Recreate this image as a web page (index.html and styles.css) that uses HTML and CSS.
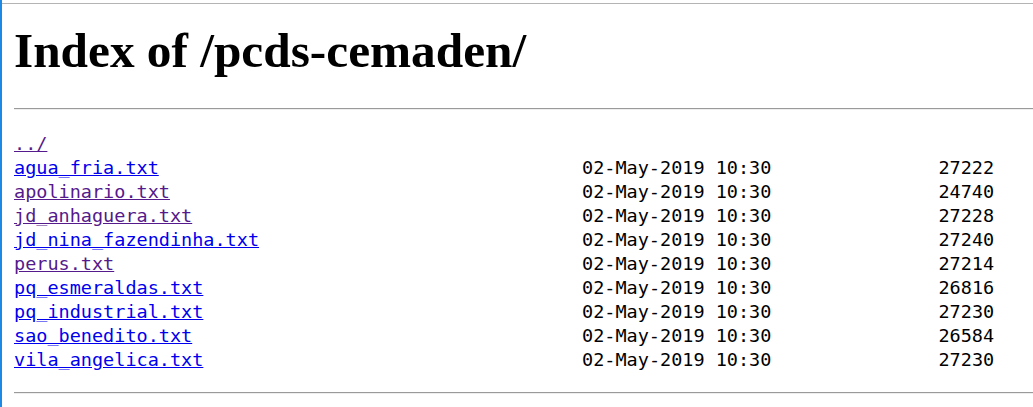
FILE: index.html
```html
<!DOCTYPE html>
<html>
<head>
<meta charset="utf-8">
<title>Index of /pcds-cemaden/</title>
<link rel="stylesheet" href="styles.css">
</head>
<body>
<div class="frame">
<div class="page">
<h1 class="title">Index of /pcds-cemaden/</h1>
<hr class="rule rule-top">
<pre class="listing"><a class="visited" href="../">../</a>
<a href="agua_fria.txt">agua_fria.txt</a>                                      02-May-2019 10:30               27222
<a class="visited" href="apolinario.txt">apolinario.txt</a>                                     02-May-2019 10:30               24740
<a class="visited" href="jd_anhaguera.txt">jd_anhaguera.txt</a>                                   02-May-2019 10:30               27228
<a href="jd_nina_fazendinha.txt">jd_nina_fazendinha.txt</a>                             02-May-2019 10:30               27240
<a class="visited" href="perus.txt">perus.txt</a>                                          02-May-2019 10:30               27214
<a href="pq_esmeraldas.txt">pq_esmeraldas.txt</a>                                  02-May-2019 10:30               26816
<a href="pq_industrial.txt">pq_industrial.txt</a>                                  02-May-2019 10:30               27230
<a href="sao_benedito.txt">sao_benedito.txt</a>                                   02-May-2019 10:30               26584
<a href="vila_angelica.txt">vila_angelica.txt</a>                                  02-May-2019 10:30               27230</pre>
<hr class="rule rule-bottom">
</div>
</div>
</body>
</html>
```

FILE: styles.css
```css
html, body {
  margin: 0;
  padding: 0;
  background: #ffffff;
}

.frame {
  border-left: 2px solid #1e88e5;
  padding-top: 3px;
  min-height: 100vh;
  box-sizing: border-box;
  overflow: hidden;
}

.page {
  border-top: 1px solid #b4b4b4;
  padding-left: 12px;
}

.title {
  margin: 19px 0 0 0;
  font-family: "Liberation Serif", "Times New Roman", serif;
  font-weight: bold;
  font-size: 49.3px;
  line-height: 55px;
  color: #000000;
}

.rule {
  height: 0;
  margin: 0;
  border: 0;
  border-top: 1px solid #9a9a9a;
  border-bottom: 1px solid #eeeeee;
}

.rule-top {
  margin-top: 30px;
}

.rule-bottom {
  margin-top: 20px;
}

.listing {
  margin: 22px 0 0 0;
  font-family: "DejaVu Sans Mono", "Liberation Mono", monospace;
  font-size: 18.5px;
  line-height: 24px;
  color: #000000;
}

.listing a {
  color: #0000ee;
  text-decoration: underline;
}

.listing a.visited {
  color: #551a8b;
}
```
